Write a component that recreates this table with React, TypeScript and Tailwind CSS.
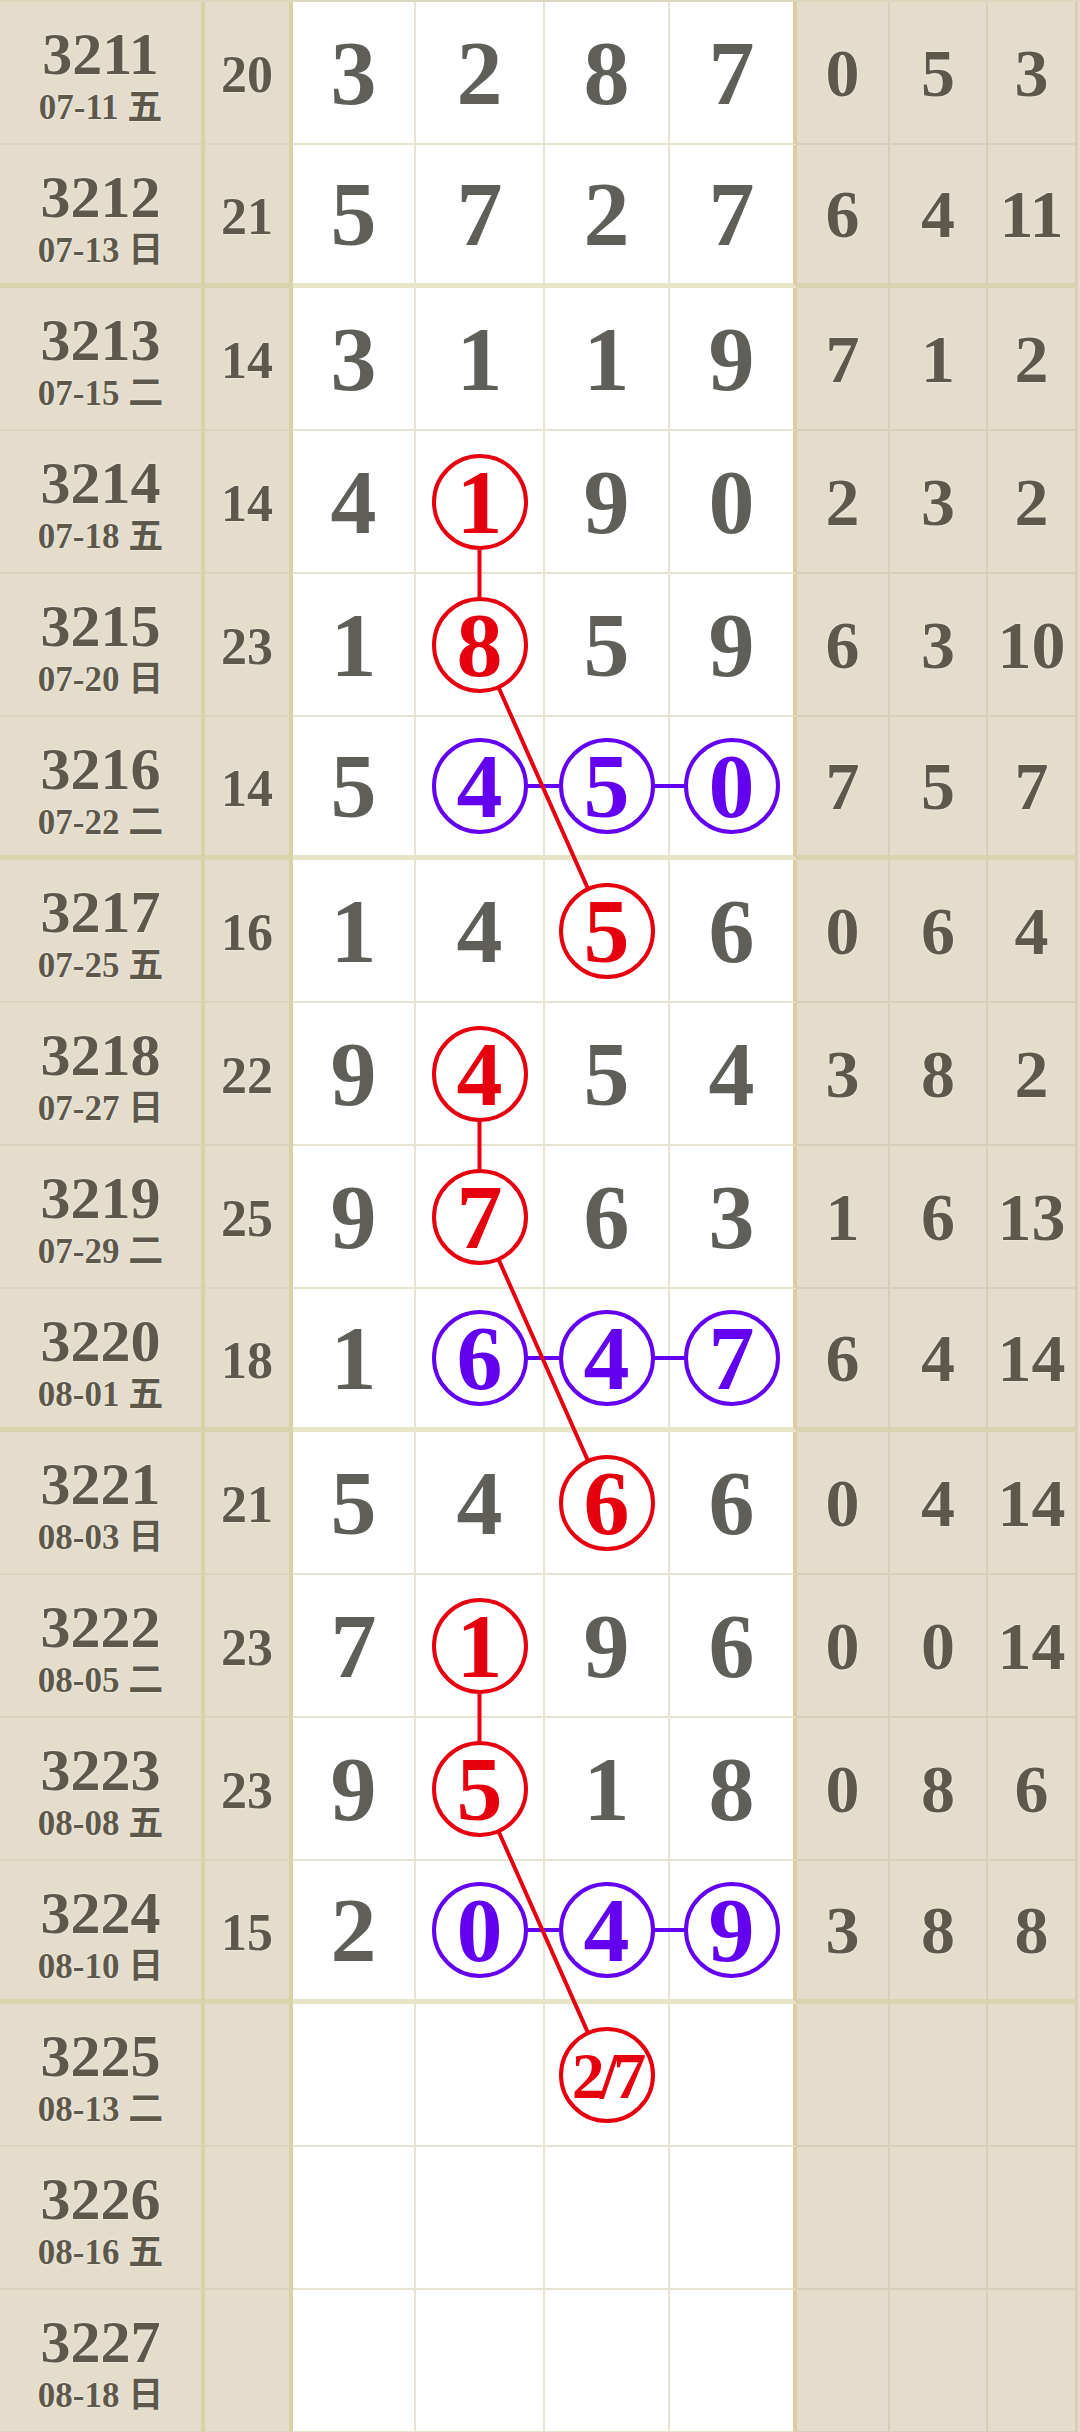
import React from "react";

type Mark = "r" | "b";

interface Row {
  no: string;
  date: string;
  sum?: string;
  digits?: string[];
  tail?: string[];
  marks?: Record<number, Mark>;
  guess?: { col: number; text: string };
}

const ROW_H = 143;

const rows: Row[] = [
  { no: "3211", date: "07-11 五", sum: "20", digits: ["3", "2", "8", "7"], tail: ["0", "5", "3"] },
  { no: "3212", date: "07-13 日", sum: "21", digits: ["5", "7", "2", "7"], tail: ["6", "4", "11"] },
  { no: "3213", date: "07-15 二", sum: "14", digits: ["3", "1", "1", "9"], tail: ["7", "1", "2"] },
  { no: "3214", date: "07-18 五", sum: "14", digits: ["4", "1", "9", "0"], tail: ["2", "3", "2"], marks: { 1: "r" } },
  { no: "3215", date: "07-20 日", sum: "23", digits: ["1", "8", "5", "9"], tail: ["6", "3", "10"], marks: { 1: "r" } },
  { no: "3216", date: "07-22 二", sum: "14", digits: ["5", "4", "5", "0"], tail: ["7", "5", "7"], marks: { 1: "b", 2: "b", 3: "b" } },
  { no: "3217", date: "07-25 五", sum: "16", digits: ["1", "4", "5", "6"], tail: ["0", "6", "4"], marks: { 2: "r" } },
  { no: "3218", date: "07-27 日", sum: "22", digits: ["9", "4", "5", "4"], tail: ["3", "8", "2"], marks: { 1: "r" } },
  { no: "3219", date: "07-29 二", sum: "25", digits: ["9", "7", "6", "3"], tail: ["1", "6", "13"], marks: { 1: "r" } },
  { no: "3220", date: "08-01 五", sum: "18", digits: ["1", "6", "4", "7"], tail: ["6", "4", "14"], marks: { 1: "b", 2: "b", 3: "b" } },
  { no: "3221", date: "08-03 日", sum: "21", digits: ["5", "4", "6", "6"], tail: ["0", "4", "14"], marks: { 2: "r" } },
  { no: "3222", date: "08-05 二", sum: "23", digits: ["7", "1", "9", "6"], tail: ["0", "0", "14"], marks: { 1: "r" } },
  { no: "3223", date: "08-08 五", sum: "23", digits: ["9", "5", "1", "8"], tail: ["0", "8", "6"], marks: { 1: "r" } },
  { no: "3224", date: "08-10 日", sum: "15", digits: ["2", "0", "4", "9"], tail: ["3", "8", "8"], marks: { 1: "b", 2: "b", 3: "b" } },
  { no: "3225", date: "08-13 二", guess: { col: 2, text: "2/7" } },
  { no: "3226", date: "08-16 五" },
  { no: "3227", date: "08-18 日" },
];

// rows closing a group of four get the heavy rule
const isGroupEnd = (i: number) => i % 4 === 1;

// centre x of the four number columns (content box, border excluded)
const digitX = [354, 479.5, 606.5, 731.5];
const centerY = (i: number) => i * ROW_H + (ROW_H - (isGroupEnd(i) ? 5 : 2)) / 2;

const RED = "#e6000f";
const BLUE = "#6400f0";

const redPaths: [number, number][][] = [
  [[3, 1], [4, 1], [6, 2]],
  [[7, 1], [8, 1], [10, 2]],
  [[11, 1], [12, 1], [14, 2]],
];
const bluePaths: [number, number][][] = [
  [[5, 1], [5, 3]],
  [[9, 1], [9, 3]],
  [[13, 1], [13, 3]],
];

const toPoints = (p: [number, number][]) =>
  p.map(([r, c]) => `${digitX[c]},${centerY(r)}`).join(" ");

function Circle({ color, children, small }: { color: Mark; children: React.ReactNode; small?: boolean }) {
  return (
    <span
      className={`relative z-10 flex h-[96px] w-[96px] items-center justify-center rounded-full border-[4px] bg-white ${
        color === "r" ? "border-[#e6000f] text-[#e6000f]" : "border-[#6400f0] text-[#6400f0]"
      } ${small ? "pt-[2px] text-[66px] tracking-[-5px]" : "text-[92px]"} leading-none`}
    >
      {children}
    </span>
  );
}

function TableRow({ row, i }: { row: Row; i: number }) {
  const end = isGroupEnd(i);
  const leftB = end ? "border-b-[5px] border-b-[#d9d5ad]" : "border-b-2 border-b-[#d9d4bd]";
  const whiteB = end ? "border-b-[5px] border-b-[#e7e5c6]" : "border-b-2 border-b-[#e6e3d3]";
  const rightB = end ? "border-b-[5px] border-b-[#d9d3b0]" : "border-b-2 border-b-[#d7cfba]";

  return (
    <div className="flex h-[143px]">
      <div className={`flex w-[205px] flex-col items-center border-r-4 border-r-[#d7d3a6] pt-[27px] ${leftB}`}>
        <span className="text-[60px] leading-[50px] text-[#5e584b] [text-shadow:0_0_2px_#fff]">{row.no}</span>
        <span className="mt-[7px] text-[35px] leading-[44px] text-[#5e584b] [text-shadow:0_0_2px_#fff]">{row.date}</span>
      </div>
      <div className={`flex w-[88px] items-center justify-center border-r-4 border-r-[#d7d3a6] pt-[5px] ${leftB}`}>
        <span className="text-[52px] leading-none text-[#5e584b] [text-shadow:0_0_2px_#fff]">{row.sum}</span>
      </div>
      {[123, 129, 125, 127].map((w, c) => {
        const mark = row.marks?.[c];
        return (
          <div
            key={c}
            style={{ width: w }}
            className={`flex items-center justify-center bg-white ${whiteB} ${
              c === 3 ? "border-r-4 border-r-[#dfcaa3]" : "border-r-2 border-r-[#e6e3d4]"
            }`}
          >
            {row.guess?.col === c ? (
              <Circle color="r" small>
                {row.guess.text}
              </Circle>
            ) : mark ? (
              <Circle color={mark}>{row.digits?.[c]}</Circle>
            ) : (
              <span className="text-[92px] leading-none text-[#5f5e58]">{row.digits?.[c]}</span>
            )}
          </div>
        );
      })}
      {[93, 98, 90].map((w, c) => (
        <div
          key={c}
          style={{ width: w }}
          className={`flex items-center justify-center ${rightB} ${
            c === 2 ? "border-r-[3px]" : "border-r-2"
          } border-r-[#d7cfb9]`}
        >
          <span className="text-[68px] leading-none text-[#5e584b] [text-shadow:0_0_2px_#fff]">{row.tail?.[c]}</span>
        </div>
      ))}
    </div>
  );
}

export default function App() {
  return (
    <div className="h-[2432px] w-[1080px] overflow-hidden border-t-2 border-t-[#dcd8c0] bg-[#e4ddcc] font-['Liberation_Serif','Noto_Sans_CJK_SC',serif] font-bold">
      <div className="relative">
        {rows.map((row, i) => (
          <TableRow key={row.no} row={row} i={i} />
        ))}
        <svg
          className="pointer-events-none absolute left-0 top-0"
          width={1080}
          height={rows.length * ROW_H}
        >
          {bluePaths.map((p, k) => (
            <polyline key={`b${k}`} points={toPoints(p)} fill="none" stroke={BLUE} strokeWidth={4} />
          ))}
          {redPaths.map((p, k) => (
            <polyline key={`r${k}`} points={toPoints(p)} fill="none" stroke={RED} strokeWidth={4} />
          ))}
        </svg>
      </div>
    </div>
  );
}
